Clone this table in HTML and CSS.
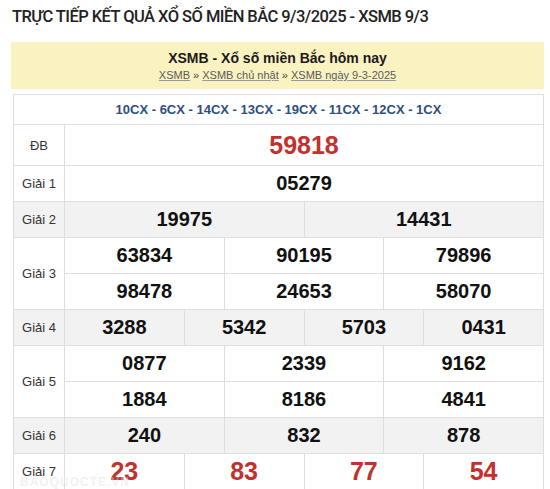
FILE: index.html
```html
<!DOCTYPE html>
<html lang="vi">
<head>
<meta charset="utf-8">
<link rel="stylesheet" href="styles.css">
</head>
<body>
<div class="page">
  <h1 class="title">TRỰC TIẾP KẾT QUẢ XỔ SỐ MIỀN BẮC 9/3/2025 - XSMB 9/3</h1>
  <div class="box-head">
    <div class="box-title">XSMB - Xổ số miền Bắc hôm nay</div>
    <div class="crumbs"><a href="#">XSMB</a> » <a href="#">XSMB chủ nhật</a> » <a href="#">XSMB ngày 9-3-2025</a></div>
  </div>
  <div class="results">
    <div class="cell codes span-all">10CX - 6CX - 14CX - 13CX - 19CX - 11CX - 12CX - 1CX</div>

    <div class="cell label">ĐB</div>
    <div class="cell num red big s12">59818</div>

    <div class="cell label">Giải 1</div>
    <div class="cell num s12">05279</div>

    <div class="cell label alt">Giải 2</div>
    <div class="cell num alt s6">19975</div>
    <div class="cell num alt s6">14431</div>

    <div class="cell label r2">Giải 3</div>
    <div class="cell num s4">63834</div>
    <div class="cell num s4">90195</div>
    <div class="cell num s4">79896</div>
    <div class="cell num s4">98478</div>
    <div class="cell num s4">24653</div>
    <div class="cell num s4">58070</div>

    <div class="cell label alt">Giải 4</div>
    <div class="cell num alt s3">3288</div>
    <div class="cell num alt s3">5342</div>
    <div class="cell num alt s3">5703</div>
    <div class="cell num alt s3">0431</div>

    <div class="cell label r2">Giải 5</div>
    <div class="cell num s4">0877</div>
    <div class="cell num s4">2339</div>
    <div class="cell num s4">9162</div>
    <div class="cell num s4">1884</div>
    <div class="cell num s4">8186</div>
    <div class="cell num s4">4841</div>

    <div class="cell label alt">Giải 6</div>
    <div class="cell num alt s4">240</div>
    <div class="cell num alt s4">832</div>
    <div class="cell num alt s4">878</div>

    <div class="cell label">Giải 7</div>
    <div class="cell num red big s3">23</div>
    <div class="cell num red big s3">83</div>
    <div class="cell num red big s3">77</div>
    <div class="cell num red big s3">54</div>
  </div>
  <div class="watermark">BAOQUOCTE.VN</div>
</div>
</body>
</html>
```

FILE: styles.css
```css
html, body {
  margin: 0;
  padding: 0;
  background: #fff;
}

body {
  font-family: "Liberation Sans", Arial, sans-serif;
  color: #222;
}

.page {
  position: relative;
  padding: 7px 6px 0 11px;
  height: 489px;
  overflow: hidden;
  box-sizing: border-box;
}

.title {
  margin: 0 0 0 1px;
  font-family: Roboto, "Liberation Sans", sans-serif;
  font-size: 16.5px;
  line-height: 20px;
  font-weight: 500;
  color: #222;
  letter-spacing: -0.55px;
}

.box-head {
  margin-top: 15px;
  height: 47px;
  background: #fbf2c2;
  display: flex;
  flex-direction: column;
  align-items: center;
  padding-top: 8px;
  box-sizing: border-box;
}

.box-title {
  font-size: 14px;
  line-height: 17px;
  font-weight: bold;
  color: #1a1a1a;
}

.crumbs {
  font-size: 11px;
  line-height: 14px;
  color: #444;
  margin-top: 1px;
}

.crumbs a {
  color: #5a5a5a;
  text-decoration: underline;
  text-decoration-color: #999;
}

.results {
  margin: 5px 0 0 2px;
  width: 531px;
  display: grid;
  grid-template-columns: 51px repeat(12, 1fr);
  grid-template-rows: 30px 41px repeat(9, 36px) 36px;
  border-top: 1px solid #dedede;
  border-left: 1px solid #dedede;
  box-sizing: border-box;
}

.cell {
  border-right: 1px solid #dedede;
  border-bottom: 1px solid #dedede;
  display: flex;
  align-items: center;
  justify-content: center;
  min-width: 0;
}

.span-all { grid-column: 1 / -1; }
.s12 { grid-column: span 12; }
.s6 { grid-column: span 6; }
.s4 { grid-column: span 4; }
.s3 { grid-column: span 3; }
.r2 { grid-row: span 2; }

.codes {
  font-size: 13px;
  font-weight: bold;
  color: #2d4f80;
}

.label {
  grid-column: 1;
  font-size: 13px;
  color: #333;
}

.num {
  font-size: 20px;
  font-weight: bold;
  color: #111;
}

.num.big {
  font-size: 25px;
}

.num.red {
  color: #c4312c;
}

.alt {
  background: #f2f2f2;
}

.watermark {
  position: absolute;
  left: 20px;
  bottom: 0;
  font-size: 12px;
  line-height: 14px;
  font-weight: bold;
  color: rgba(225, 225, 225, 0.45);
  letter-spacing: 1px;
}
```
